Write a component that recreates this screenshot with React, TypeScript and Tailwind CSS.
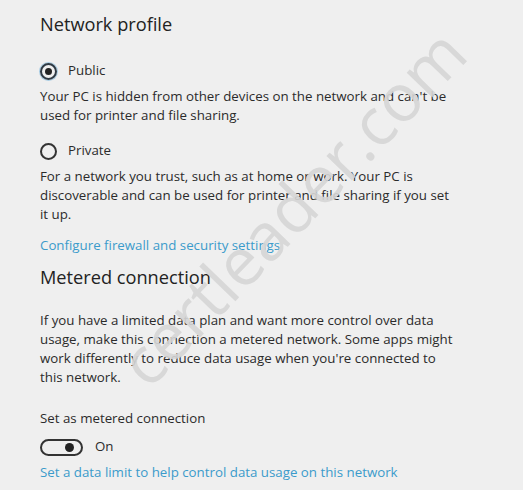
export default function App() {
  return (
    <div
      className="relative w-[523px] h-[490px] overflow-hidden bg-[#efefef] text-[#2b2b2b]"
      style={{ fontFamily: '"Open Sans", "Noto Sans", sans-serif' }}
    >
      <main className="flex flex-col pl-[40px] pt-[10px]">
        {/* Network profile */}
        <h2 className="text-[18.2px] leading-[28px] text-[#222]">Network profile</h2>

        <label className="mt-[23px] flex items-center gap-[11px] h-[20px]">
          <span className="flex h-[17px] w-[17px] items-center justify-center rounded-full border-2 border-[#2f3a44] shadow-[0_0_0_1px_#a9cde4]">
            <span className="h-[7px] w-[7px] rounded-full bg-[#222]" />
          </span>
          <span className="text-[13.3px]">Public</span>
        </label>
        <p className="mt-[6px] text-[13.3px] leading-[19px] whitespace-nowrap">
          Your PC is hidden from other devices on the network and can't be
          <br />
          used for printer and file sharing.
        </p>

        <label className="mt-[16px] flex items-center gap-[11px] h-[20px]">
          <span className="h-[17px] w-[17px] rounded-full border-2 border-[#333]" />
          <span className="text-[13.3px]">Private</span>
        </label>
        <p className="mt-[6px] text-[13.3px] leading-[19px] whitespace-nowrap">
          For a network you trust, such as at home or work. Your PC is
          <br />
          discoverable and can be used for printer and file sharing if you set
          <br />
          it up.
        </p>

        <a className="mt-[12px] text-[13.3px] leading-[19px] text-[#3b9bcb]">
          Configure firewall and security settings
        </a>

        {/* Metered connection */}
        <h2 className="mt-[8px] text-[18.2px] leading-[28px] text-[#222]">Metered connection</h2>

        <p className="mt-[20px] text-[13.3px] leading-[19px] whitespace-nowrap">
          If you have a limited data plan and want more control over data
          <br />
          usage, make this connection a metered network. Some apps might
          <br />
          work differently to reduce data usage when you're connected to
          <br />
          this network.
        </p>

        <span className="mt-[22px] text-[13.3px] leading-[19px]">Set as metered connection</span>

        <div className="mt-[9px] flex items-center gap-[12px] h-[20px]">
          <span className="flex h-[17px] w-[43px] items-center justify-end rounded-full border-2 border-[#333] pr-[7px]">
            <span className="h-[9px] w-[9px] rounded-full bg-[#222]" />
          </span>
          <span className="text-[13.3px]">On</span>
        </div>

        <a className="mt-[6px] text-[13.3px] leading-[19px] text-[#3b9bcb]">
          Set a data limit to help control data usage on this network
        </a>
      </main>

      {/* watermark */}
      <div className="pointer-events-none absolute left-[291px] top-[206px] -translate-x-1/2 -translate-y-1/2 -rotate-[46deg] whitespace-nowrap text-[66px] font-medium leading-none text-[#d6d6d6] opacity-90">
        certleader.com
      </div>
    </div>
  );
}
